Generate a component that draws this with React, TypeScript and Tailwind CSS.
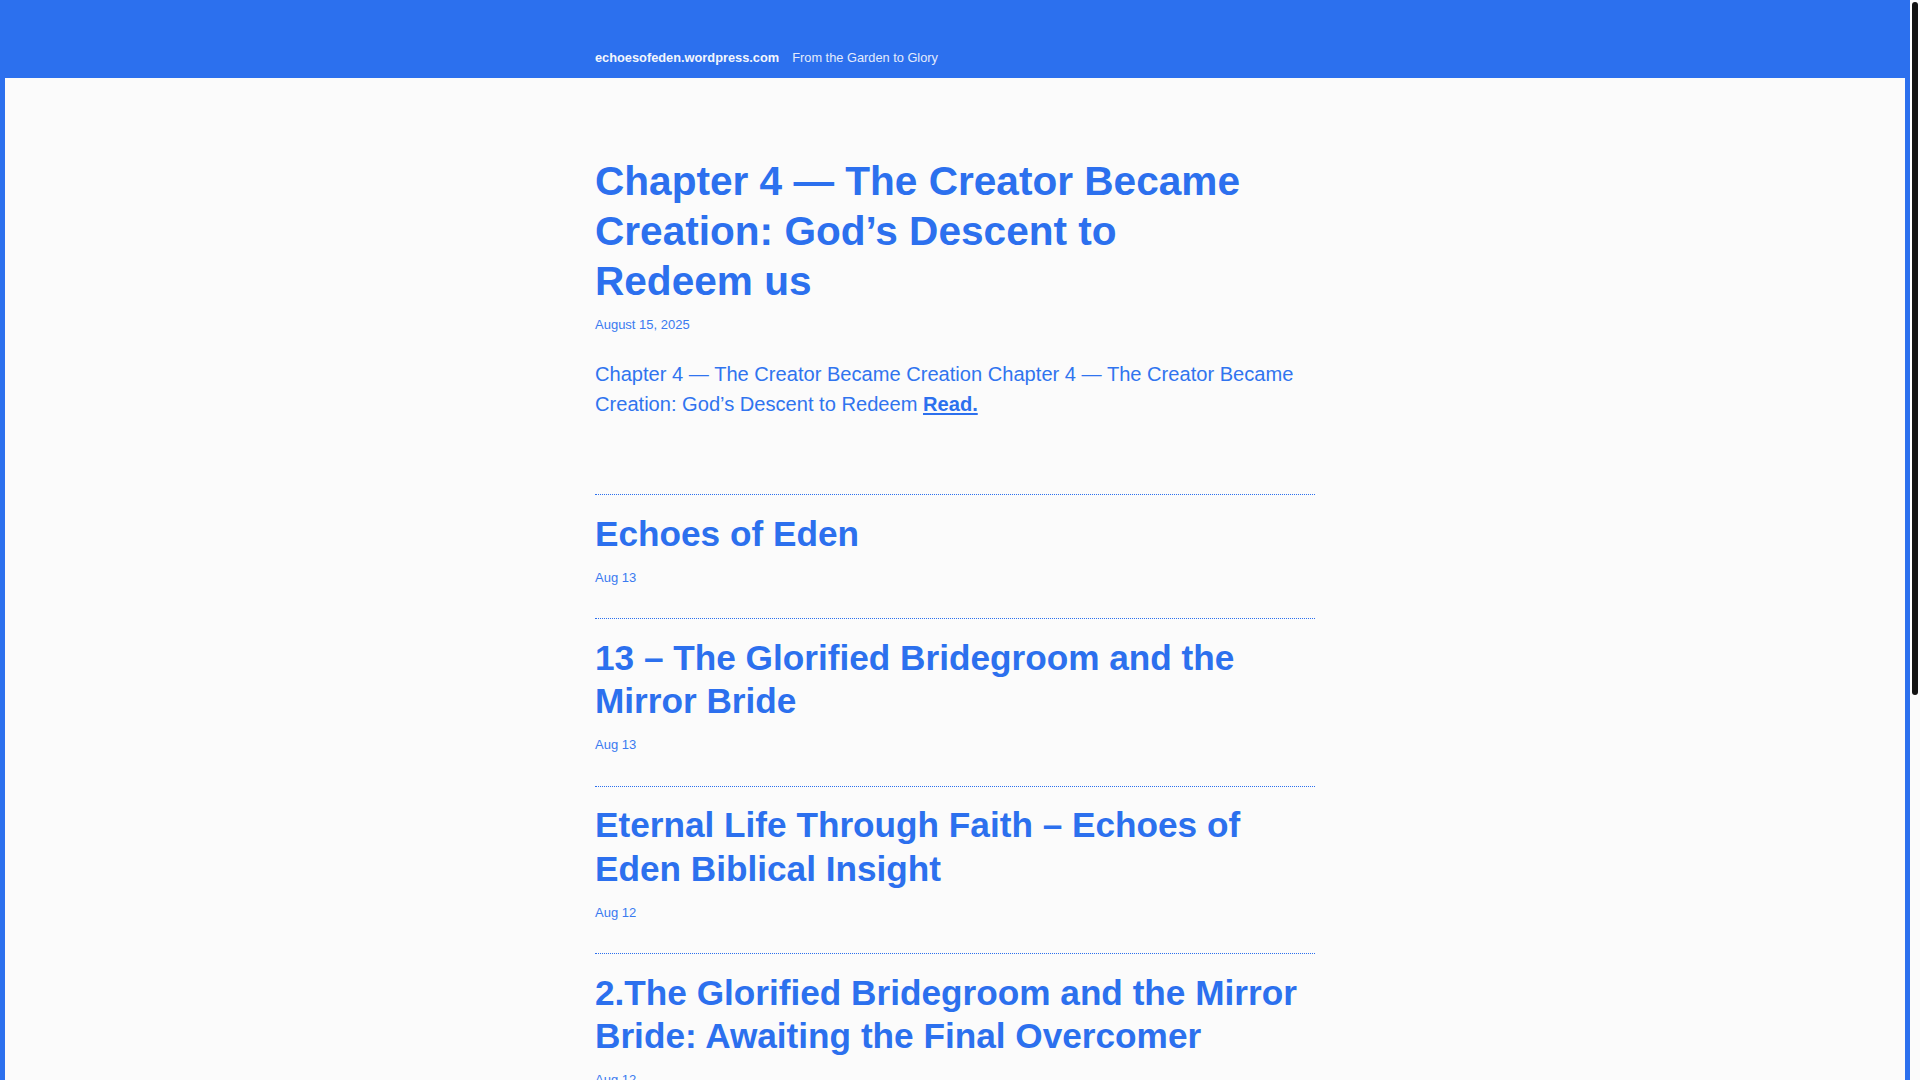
import React from "react";

const posts = [
  { title: "Echoes of Eden", date: "Aug 13" },
  { title: "13 – The Glorified Bridegroom and the Mirror Bride", date: "Aug 13" },
  { title: "Eternal Life Through Faith – Echoes of Eden Biblical Insight", date: "Aug 12" },
  { title: "2.The Glorified Bridegroom and the Mirror Bride: Awaiting the Final Overcomer", date: "Aug 12" },
];

export default function App() {
  return (
    <div className="flex h-screen bg-[#fbfbfb] font-['Liberation_Sans',Arial,sans-serif]">
      <div className="min-w-0 flex-1 overflow-y-auto bg-[#2c70ee] [scrollbar-width:none]">
        <div className="px-[5px]">
          <header className="h-[78px] pt-[48px]">
            <div className="mx-auto flex w-[720px] text-[12.8px] leading-[20px] text-white">
              <a className="font-bold text-[#f3f6fd]">echoesofeden.wordpress.com</a>
              <span className="ml-[13px] text-[#e3ebfc]">From the Garden to Glory</span>
            </div>
          </header>
          <main className="bg-[#fbfbfb] pt-[78px] pb-[551px]">
            <div className="mx-auto w-[720px] text-[#2c70ee]">
              <article className="pb-[75px]">
                <h1 className="max-w-[660px] text-[40.6px] font-bold leading-[50px]">
                  Chapter 4 — The Creator Became Creation: God’s Descent to Redeem us
                </h1>
                <div className="mt-[9px] text-[13px] leading-[20px] text-[#3a7af0]">August 15, 2025</div>
                <p className="mt-[24px] text-[20.1px] leading-[30px] text-[#3074ef]">
                  Chapter 4 — The Creator Became Creation Chapter 4 — The Creator Became Creation: God’s Descent to Redeem{" "}
                  <a className="font-bold text-[#2c70ee] underline">Read.</a>
                </p>
              </article>
              {posts.map((p) => (
                <article
                  key={p.title}
                  className="border-t border-dotted border-[#2c70ee] pt-[16.5px] pb-[30.5px]"
                >
                  <h2 className="text-[35.2px] font-bold leading-[43.5px]">{p.title}</h2>
                  <div className="mt-[12.5px] text-[13px] leading-[20px] text-[#3a7af0]">{p.date}</div>
                </article>
              ))}
            </div>
          </main>
        </div>
      </div>
      <div className="w-[10px] shrink-0 bg-[#fbfbfb] px-[2px] pt-[2px]">
        <div className="h-[693px] rounded-[3px] bg-[#111111]" />
      </div>
    </div>
  );
}
